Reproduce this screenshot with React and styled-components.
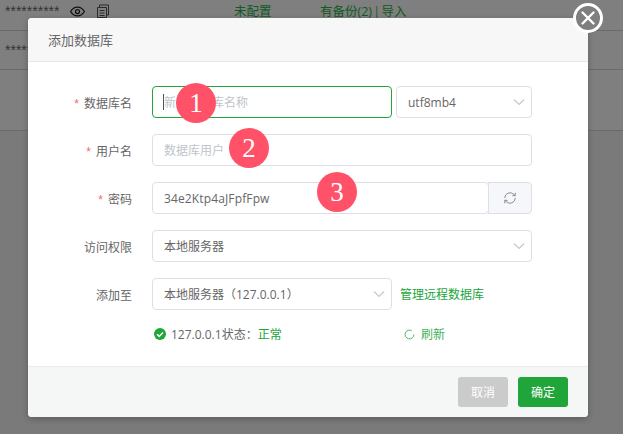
import React from 'react';
import styled, { createGlobalStyle } from 'styled-components';

const Global = createGlobalStyle`
  html, body { margin: 0; padding: 0; }
  body { font-family: "Liberation Sans", "Noto Sans CJK SC", sans-serif; }
  * { box-sizing: border-box; }
`;
const FONT = `"Open Sans", "Noto Sans CJK SC", sans-serif`;

const Page = styled.div`
  position: relative; width: 623px; height: 434px; overflow: hidden;
  background: #7a7a7a; font-family: ${FONT};
`;
const BgRow = styled.div`
  height: ${p => p.$h}px; border-bottom: 1px solid #6a6a6a; background: #7f7f7f;
  display: flex; align-items: flex-start; padding: ${p => p.$pt}px 0 0 5px; color: #333;
`;
const Stars = styled.span` width: 65px; flex: none; line-height: 14px; font-family: "Liberation Sans", sans-serif; font-size: 14px; `;
const BgIcons = styled.span` display: flex; gap: 11px; width: 164px; flex: none; `;
const BgLabel = styled.span`
  color: #0e5a24; font-size: 12.5px; line-height: 16px; width: ${p => p.$w}px; flex: none;
  word-spacing: ${p => p.$ws || 0}px; white-space: nowrap;
`;

const Dialog = styled.div`
  position: absolute; left: 28px; top: 18px; width: 560px; height: 399px;
  background: #fff; border-radius: 4px; display: flex; flex-direction: column;
  box-shadow: 0 2px 6px rgba(0,0,0,.25);
`;
const Header = styled.div`
  height: 44px; padding-left: 20px; display: flex; align-items: center;
  background: #f7f7f7; border-bottom: 1px solid #e8e8e8; border-radius: 4px 4px 0 0;
  font-size: 13px; color: #666;
`;
const Close = styled.div`
  position: absolute; right: -15px; top: -15px; width: 30px; height: 30px; border-radius: 50%;
  background: #7f7f7f; border: 3px solid #fff; display: flex; align-items: center; justify-content: center;
`;
const Form = styled.div`
  flex: 1; padding: 24px 0 0; display: flex; flex-direction: column; gap: 16px;
`;
const Row = styled.div` display: flex; align-items: center; height: 32px; `;
const Label = styled.div`
  width: 104px; text-align: right; font-size: 12px; color: #666; padding-top: 1px;
  flex: none; margin-right: 20px;
`;
const Req = styled.span` color: #f56c6c; margin-right: 5px; font-family: "Liberation Sans", sans-serif; `;
const Box = styled.div`
  height: 32px; width: ${p => p.$w}px; flex: none; position: relative;
  margin-left: ${p => p.$ml || 0}px;
  border: 1px solid ${p => p.$focus ? '#20a53a' : '#dcdfe6'}; border-radius: 4px;
  display: flex; align-items: center; padding-left: 11px; letter-spacing: ${p => p.$ls || 0}px;
  font-size: 12px; color: ${p => p.$ph ? '#c0c4cc' : '#666'}; background: #fff;
`;
const Caret = styled.span` position: absolute; left: 10px; top: 7px; width: 1px; height: 16px; background: #555; `;
const Chev = styled.svg` position: absolute; right: 6px; top: 10px; `;
const Append = styled.div`
  width: 44px; height: 32px; flex: none; margin-left: -1px; background: #f5f7fa;
  border: 1px solid #dcdfe6; border-radius: 0 4px 4px 0;
  display: flex; align-items: center; justify-content: center;
`;
const GreenLink = styled.span` color: #20a53a; font-size: 12px; margin-left: ${p => p.$ml}px; white-space: nowrap; `;
const StatusRow = styled.div`
  display: flex; align-items: center; height: 16px; margin: 0 0 0 126px; font-size: 12px; color: #666;
`;
const Status = styled.span` margin-left: 5px; width: 233px; flex: none; `;
const Good = styled.span` color: #20a53a; `;
const Refresh = styled.span` display: flex; align-items: center; gap: 6px; color: #20a53a; font-size: 12px; opacity: .85; `;
const Footer = styled.div`
  height: 51px; background: #f5f6f6; border-top: 1px solid #ececec; border-radius: 0 0 4px 4px;
  display: flex; align-items: center; justify-content: flex-end; gap: 10px; padding-right: 20px;
`;
const Btn = styled.div`
  width: 50px; height: 30px; border-radius: 3px; background: ${p => p.$bg}; color: #fff; font-size: 12px;
  display: flex; align-items: center; justify-content: center;
`;
const Badge = styled.div`
  position: absolute; left: ${p => p.$x}px; top: ${p => p.$y}px; width: 40px; height: 40px; border-radius: 50%;
  background: #ff5268; color: #fff; font-family: "Liberation Serif", serif; font-size: 27px;
  display: flex; align-items: center; justify-content: center;
`;

const Chevron = () => (
  <Chev width="12" height="10" viewBox="0 0 12 10" fill="none" stroke="#c4c6cc" strokeWidth="1.1"><path d="M1 2.5 L6 7.5 L11 2.5" /></Chev>
);

export default function App() {
  return (
    <Page>
      <Global />
      <BgRow $h={31} $pt={4}>
        <Stars>**********</Stars>
        <BgIcons>
          <svg width="15" height="15" viewBox="0 0 24 24" fill="none" stroke="#111" strokeWidth="2"><path d="M1 12s4-7 11-7 11 7 11 7-4 7-11 7-11-7-11-7z" /><circle cx="12" cy="12" r="3.2" /></svg>
          <svg width="14" height="15" viewBox="0 0 14 15" fill="none" stroke="#2a2a2a" strokeWidth="1"><path d="M3.5 3V1h9v10h-2M1.5 3.5h9v10h-9zM3.5 6.5h5M3.5 9h5M3.5 11.5h5" /></svg>
        </BgIcons>
        <BgLabel $w={86}>未配置</BgLabel>
        <BgLabel $ws={-2}>有备份(2) | 导入</BgLabel>
      </BgRow>
      <BgRow $h={39} $pt={12}><Stars>**********</Stars></BgRow>
      <BgRow $h={61} $pt={0} />
      <Dialog>
        <Close>
          <svg width="16" height="16" viewBox="0 0 16 16" stroke="#fff" strokeWidth="2.4" strokeLinecap="round"><path d="M2.5 2.5l11 11M13.5 2.5l-11 11" /></svg>
        </Close>
        <Header>添加数据库</Header>
        <Form>
          <Row>
            <Label><Req>*</Req>数据库名</Label>
            <Box $w={240} $focus $ph><Caret />新建数据库名称</Box>
            <Box $w={136} $ml={4}>utf8mb4<Chevron /></Box>
          </Row>
          <Row>
            <Label><Req>*</Req>用户名</Label>
            <Box $w={380} $ph>数据库用户</Box>
          </Row>
          <Row>
            <Label><Req>*</Req>密码</Label>
            <Box $w={337} $ls={0.13}>34e2Ktp4aJFpfFpw</Box>
            <Append>
              <svg width="14" height="14" viewBox="0 0 24 24" fill="none" stroke="#8a8d93" strokeWidth="1.7"><path d="M3 12a9 9 0 0 1 15.5-6.2L21 8M21 3v5h-5M21 12a9 9 0 0 1-15.5 6.2L3 16M3 21v-5h5" /></svg>
            </Append>
          </Row>
          <Row>
            <Label>访问权限</Label>
            <Box $w={380}>本地服务器<Chevron /></Box>
          </Row>
          <Row>
            <Label>添加至</Label>
            <Box $w={240}>本地服务器（127.0.0.1）<Chevron /></Box>
            <GreenLink $ml={8}>管理远程数据库</GreenLink>
          </Row>
          <StatusRow>
            <svg width="12" height="12" viewBox="0 0 12 12"><circle cx="6" cy="6" r="6" fill="#20a53a" /><path d="M3 6.2l2.2 2.2L9 4.4" fill="none" stroke="#fff" strokeWidth="1.5" /></svg>
            <Status>127.0.0.1状态：<Good>正常</Good></Status>
            <Refresh>
              <svg width="11" height="11" viewBox="0 0 12 12" fill="none" stroke="#20a53a" strokeWidth="1"><path d="M10.8 6A4.8 4.8 0 1 1 8.5 1.9" /></svg>
              刷新
            </Refresh>
          </StatusRow>
        </Form>
        <Footer>
          <Btn $bg="#cbcbcb">取消</Btn>
          <Btn $bg="#20a53a">确定</Btn>
        </Footer>
      </Dialog>
      <Badge $x={176} $y={83}>1</Badge>
      <Badge $x={229} $y={128}>2</Badge>
      <Badge $x={317} $y={172}>3</Badge>
    </Page>
  );
}
